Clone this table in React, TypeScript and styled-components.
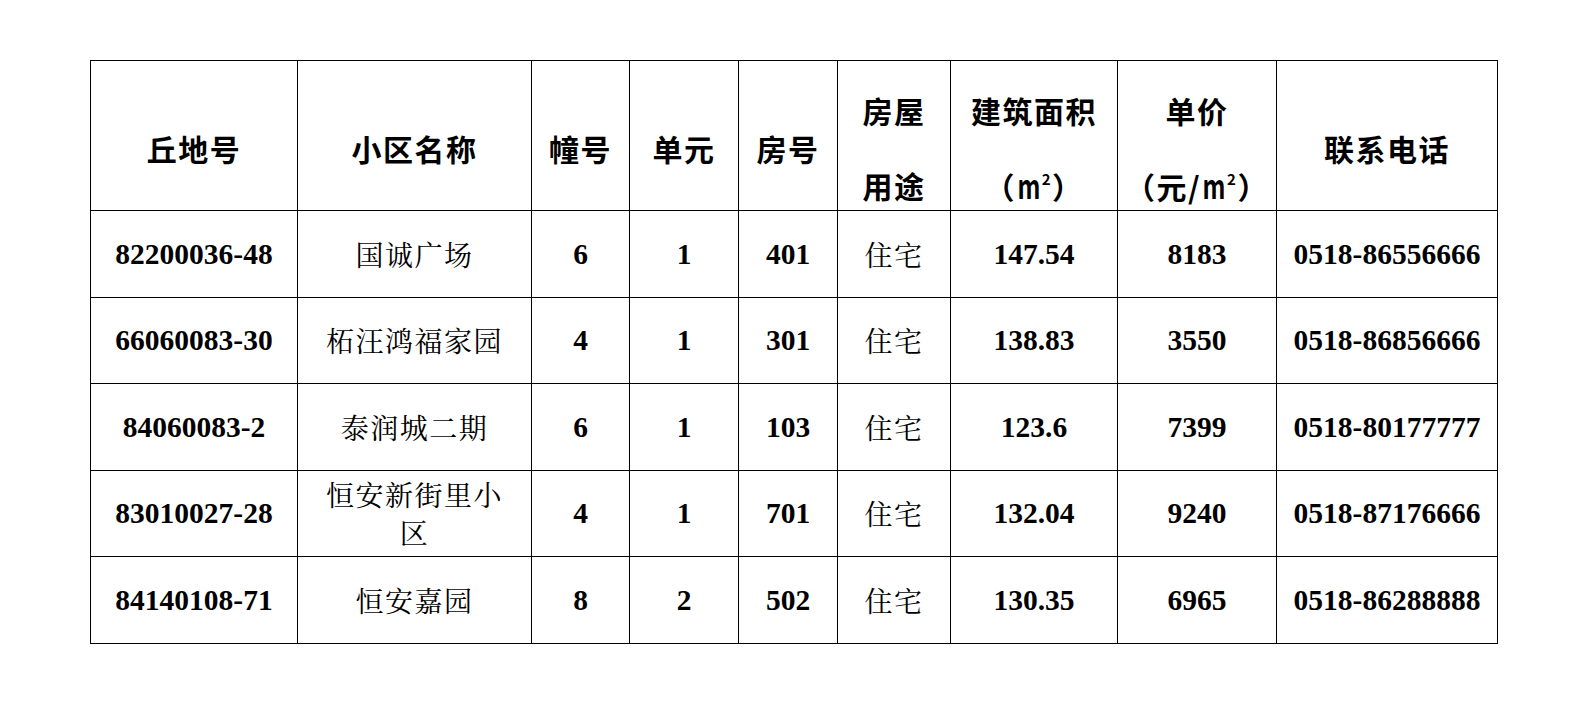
import styled, { createGlobalStyle } from 'styled-components';

const GlobalStyle = createGlobalStyle`
  html, body {
    margin: 0;
    padding: 0;
    background: #ffffff;
  }
`;

const Page = styled.main`
  width: 1587px;
  height: 705px;
  padding: 60px 0 0 90px;
  box-sizing: border-box;
  background: #ffffff;
`;

const Table = styled.table`
  border-collapse: collapse;
  table-layout: fixed;
  color: #000000;
`;

const HeadCell = styled.th`
  height: 149px;
  padding: 0;
  border: 1px solid #000000;
  vertical-align: top;
`;

/* Word-style header: text sits low in the cell, with wide line spacing */
const HeadText = styled.div`
  height: 148px;
  padding-top: 26px;
  box-sizing: border-box;
  display: flex;
  flex-direction: column;
  justify-content: center;
  align-items: center;
  font-family: "Noto Sans CJK SC", "Noto Sans", sans-serif;
  font-weight: 700;
  font-size: 30px;
  letter-spacing: 1.5px;
  line-height: 75px;
  white-space: nowrap;
`;

const SquareM = styled.span`
  display: inline-block;
  font-size: 33px;
  letter-spacing: 0;
  transform: scaleX(0.72);
  margin: 0 -4px 0 -3px;
`;

const Sup = styled.sup`
  font-size: 15px;
  line-height: 0;
  vertical-align: 0;
  position: relative;
  top: -14px;
  margin-left: 1px;
`;

const Cell = styled.td<{ $cjk?: boolean }>`
  height: 86.5px;
  padding: 0 14px;
  box-sizing: border-box;
  border: 1px solid #000000;
  text-align: center;
  vertical-align: middle;
  font-family: ${(p) =>
    p.$cjk
      ? '"Noto Serif CJK SC", "Noto Sans CJK SC", serif'
      : '"Liberation Serif", "Times New Roman", serif'};
  font-weight: ${(p) => (p.$cjk ? 400 : 700)};
  font-size: ${(p) => (p.$cjk ? '28px' : '29.5px')};
  line-height: 38px;
  letter-spacing: ${(p) => (p.$cjk ? '1.5px' : '0')};
  white-space: ${(p) => (p.$cjk ? 'normal' : 'nowrap')};
`;

const widths = [207, 234, 98, 109, 99, 113, 167, 159, 221];

const sqm = (
  <>
    <SquareM>m</SquareM>
    <Sup>2</Sup>
  </>
);

const headers = [
  ['丘地号'],
  ['小区名称'],
  ['幢号'],
  ['单元'],
  ['房号'],
  ['房屋', '用途'],
  ['建筑面积', <>（{sqm}）</>],
  ['单价', <>（元/{sqm}）</>],
  ['联系电话'],
];

const rows = [
  ['82200036-48', '国诚广场', '6', '1', '401', '住宅', '147.54', '8183', '0518-86556666'],
  ['66060083-30', '柘汪鸿福家园', '4', '1', '301', '住宅', '138.83', '3550', '0518-86856666'],
  ['84060083-2', '泰润城二期', '6', '1', '103', '住宅', '123.6', '7399', '0518-80177777'],
  ['83010027-28', '恒安新街里小区', '4', '1', '701', '住宅', '132.04', '9240', '0518-87176666'],
  ['84140108-71', '恒安嘉园', '8', '2', '502', '住宅', '130.35', '6965', '0518-86288888'],
];

export default function App() {
  return (
    <Page>
      <GlobalStyle />
      <Table>
        <colgroup>
          {widths.map((w, i) => (
            <col key={i} style={{ width: w }} />
          ))}
        </colgroup>
        <thead>
          <tr>
            {headers.map((lines, i) => (
              <HeadCell key={i}>
                <HeadText>
                  {lines.map((l, j) => (
                    <span key={j}>{l}</span>
                  ))}
                </HeadText>
              </HeadCell>
            ))}
          </tr>
        </thead>
        <tbody>
          {rows.map((r) => (
            <tr key={r[0]}>
              {r.map((v, i) => (
                <Cell key={i} $cjk={i === 1 || i === 5}>
                  {v}
                </Cell>
              ))}
            </tr>
          ))}
        </tbody>
      </Table>
    </Page>
  );
}
